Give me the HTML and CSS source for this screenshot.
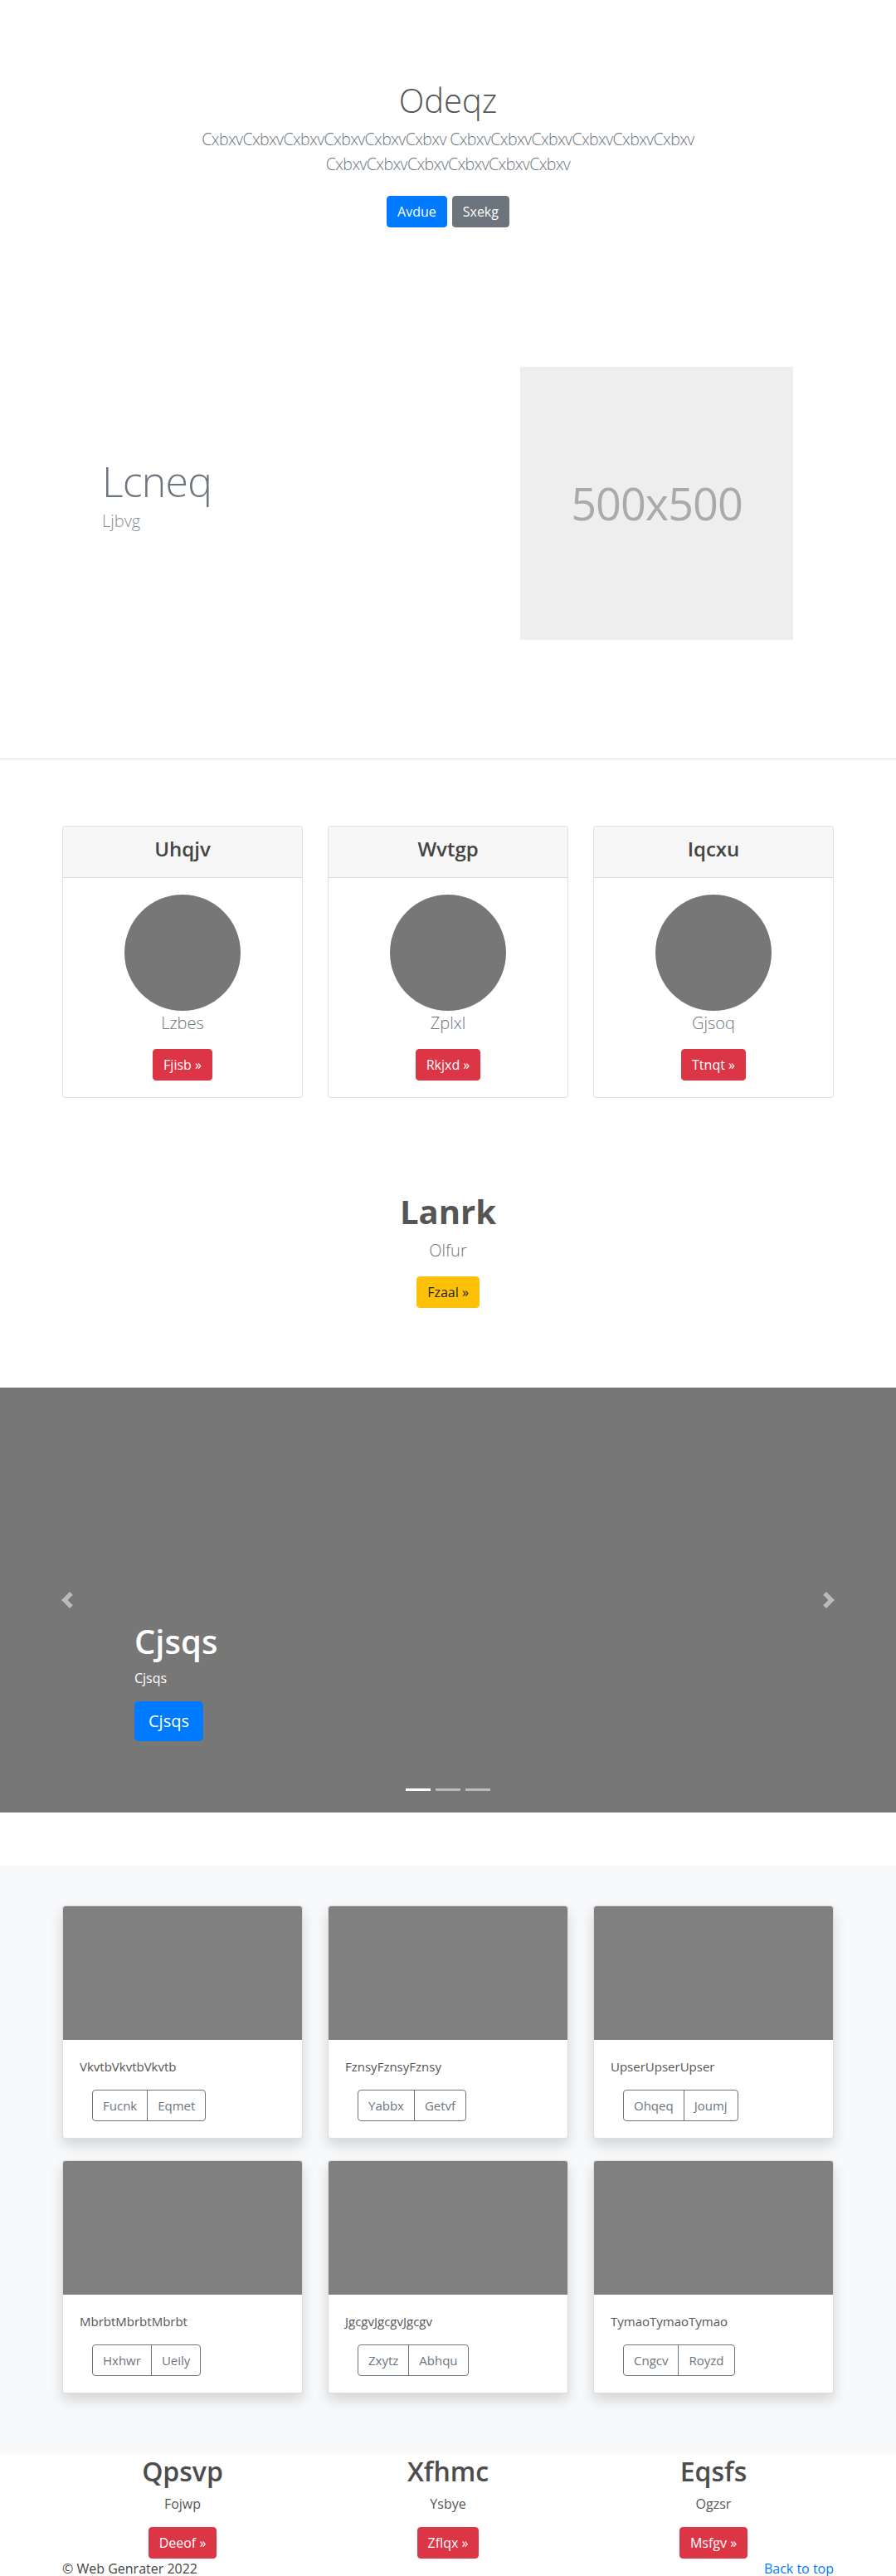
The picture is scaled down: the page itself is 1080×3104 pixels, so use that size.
FILE: index.html
```html
<!DOCTYPE html>
<html lang="en">
<head>
<meta charset="utf-8">
<title>Odeqz</title>
<link rel="stylesheet" href="styles.css">
</head>
<body>
<section class="hero">
  <h1 class="hero-title">Odeqz</h1>
  <p class="hero-lead">CxbxvCxbxvCxbxvCxbxvCxbxvCxbxv CxbxvCxbxvCxbxvCxbxvCxbxvCxbxv CxbxvCxbxvCxbxvCxbxvCxbxvCxbxv</p>
  <div class="hero-actions">
    <a class="btn btn-primary">Avdue</a>
    <a class="btn btn-secondary">Sxekg</a>
  </div>
</section>

<section class="feature">
  <div class="container feature-row">
    <div class="feature-text">
      <h2 class="feature-heading">Lcneq</h2>
      <p class="feature-lead">Ljbvg</p>
    </div>
    <div class="placeholder">500x500</div>
  </div>
</section>

<hr class="divider">

<section class="team">
  <div class="container team-grid">
    <div class="card">
      <div class="card-header"><h4>Uhqjv</h4></div>
      <div class="card-body center">
        <div class="avatar"></div>
        <p class="member">Lzbes</p>
        <a class="btn btn-danger">Fjisb &raquo;</a>
      </div>
    </div>
    <div class="card">
      <div class="card-header"><h4>Wvtgp</h4></div>
      <div class="card-body center">
        <div class="avatar"></div>
        <p class="member">Zplxl</p>
        <a class="btn btn-danger">Rkjxd &raquo;</a>
      </div>
    </div>
    <div class="card">
      <div class="card-header"><h4>Iqcxu</h4></div>
      <div class="card-body center">
        <div class="avatar"></div>
        <p class="member">Gjsoq</p>
        <a class="btn btn-danger">Ttnqt &raquo;</a>
      </div>
    </div>
  </div>
</section>

<section class="cta">
  <h2 class="cta-title">Lanrk</h2>
  <p class="cta-lead">Olfur</p>
  <a class="btn btn-warning">Fzaal &raquo;</a>
</section>

<section class="carousel">
  <div class="carousel-caption">
    <h1>Cjsqs</h1>
    <p>Cjsqs</p>
    <a class="btn btn-primary btn-lg">Cjsqs</a>
  </div>
  <a class="carousel-control prev">
    <svg width="20" height="20" viewBox="0 0 8 8"><path fill="#fff" d="M5.25 0l-4 4 4 4 1.5-1.5L4.25 4l2.5-2.5L5.25 0z"/></svg>
  </a>
  <a class="carousel-control next">
    <svg width="20" height="20" viewBox="0 0 8 8"><path fill="#fff" d="M2.75 0l-1.5 1.5L3.75 4l-2.5 2.5L2.75 8l4-4-4-4z"/></svg>
  </a>
  <ol class="indicators">
    <li class="active"></li>
    <li></li>
    <li></li>
  </ol>
</section>

<section class="album">
  <div class="container album-grid">
    <div class="album-card">
      <div class="thumb"></div>
      <div class="album-body">
        <p>VkvtbVkvtbVkvtb</p>
        <div class="btn-group"><a class="btn-outline">Fucnk</a><a class="btn-outline">Eqmet</a></div>
      </div>
    </div>
    <div class="album-card">
      <div class="thumb"></div>
      <div class="album-body">
        <p>FznsyFznsyFznsy</p>
        <div class="btn-group"><a class="btn-outline">Yabbx</a><a class="btn-outline">Getvf</a></div>
      </div>
    </div>
    <div class="album-card">
      <div class="thumb"></div>
      <div class="album-body">
        <p>UpserUpserUpser</p>
        <div class="btn-group"><a class="btn-outline">Ohqeq</a><a class="btn-outline">Joumj</a></div>
      </div>
    </div>
    <div class="album-card">
      <div class="thumb"></div>
      <div class="album-body">
        <p>MbrbtMbrbtMbrbt</p>
        <div class="btn-group"><a class="btn-outline">Hxhwr</a><a class="btn-outline">Ueily</a></div>
      </div>
    </div>
    <div class="album-card">
      <div class="thumb"></div>
      <div class="album-body">
        <p>JgcgvJgcgvJgcgv</p>
        <div class="btn-group"><a class="btn-outline">Zxytz</a><a class="btn-outline">Abhqu</a></div>
      </div>
    </div>
    <div class="album-card">
      <div class="thumb"></div>
      <div class="album-body">
        <p>TymaoTymaoTymao</p>
        <div class="btn-group"><a class="btn-outline">Cngcv</a><a class="btn-outline">Royzd</a></div>
      </div>
    </div>
  </div>
</section>

<section class="marketing">
  <div class="container marketing-grid">
    <div class="col">
      <h2>Qpsvp</h2>
      <p>Fojwp</p>
      <a class="btn btn-danger">Deeof &raquo;</a>
    </div>
    <div class="col">
      <h2>Xfhmc</h2>
      <p>Ysbye</p>
      <a class="btn btn-danger">Zflqx &raquo;</a>
    </div>
    <div class="col">
      <h2>Eqsfs</h2>
      <p>Ogzsr</p>
      <a class="btn btn-danger">Msfgv &raquo;</a>
    </div>
  </div>
</section>

<footer class="container footer">
  <p>&copy; Web Genrater 2022</p>
  <a class="link">Back to top</a>
</footer>
</body>
</html>
```

FILE: styles.css
```css
* { box-sizing: border-box; }

body {
  margin: 0;
  font-family: "Open Sans", "Noto Sans", "Liberation Sans", sans-serif;
  font-size: 16px;
  line-height: 1.5;
  color: #212529;
  background: #fff;
}

p { margin: 0; }
h1, h2, h4 { margin: 0; }

.container {
  width: 930px;
  margin: 0 auto;
}

.btn {
  display: inline-block;
  font-size: 16px;
  line-height: 24px;
  padding: 6px 12px;
  border-radius: 4px;
  border: 1px solid transparent;
  text-decoration: none;
  cursor: pointer;
}
.btn-primary { background: #007bff; border-color: #007bff; color: #fff; }
.btn-secondary { background: #6c757d; border-color: #6c757d; color: #fff; }
.btn-danger { background: #dc3545; border-color: #dc3545; color: #fff; }
.btn-warning { background: #ffc107; border-color: #ffc107; color: #212529; }
.btn-lg { font-size: 20px; line-height: 30px; padding: 8px 16px; border-radius: 5px; }

/* hero */
.hero {
  text-align: center;
  padding-top: 97px;
}
.hero-title {
  font-size: 40px;
  line-height: 48px;
  font-weight: 300;
  color: #555;
  margin-bottom: 8px;
}
.hero-lead {
  font-size: 19.5px;
  line-height: 30px;
  font-weight: 300;
  color: #6c757d;
  max-width: 660px;
  margin: 0 auto 23px;
  letter-spacing: -0.6px;
}
.hero-actions {
  display: flex;
  justify-content: center;
  gap: 6px;
}

/* feature */
.feature {
  padding: 168px 0 143px;
}
.feature-row {
  display: flex;
  align-items: center;
  justify-content: space-between;
  padding: 0 49px 0 48px;
}
.feature-heading {
  font-size: 50px;
  line-height: 50px;
  font-weight: 300;
  color: #6c757d;
  letter-spacing: -0.8px;
  margin-bottom: 8px;
}
.feature-lead {
  font-size: 20px;
  line-height: 30px;
  font-weight: 300;
  color: #868e96;
  margin-bottom: 16px;
}
.placeholder {
  width: 329px;
  height: 329px;
  background: #eee;
  color: #aaa;
  font-size: 54px;
  display: flex;
  align-items: center;
  justify-content: center;
  letter-spacing: -1px;
}

.divider {
  margin: 0;
  border: 0;
  border-top: 1px solid #e5e5e5;
}

/* team cards */
.team { padding-top: 80px; }
.team-grid {
  display: grid;
  grid-template-columns: repeat(3, 1fr);
  gap: 30px;
}
.card {
  border: 1px solid rgba(0,0,0,.125);
  border-radius: 4px;
  background: #fff;
}
.card-header {
  background: #f7f7f7;
  border-bottom: 1px solid rgba(0,0,0,.125);
  padding: 12px 20px;
  text-align: center;
  border-radius: 3px 3px 0 0;
}
.card-header h4 {
  font-size: 24px;
  line-height: 29px;
  font-weight: 600;
  color: #444;
  margin-bottom: 8px;
}
.card-body { padding: 20px; }
.center { text-align: center; }
.avatar {
  width: 140px;
  height: 140px;
  border-radius: 50%;
  background: #777;
  margin: 0 auto;
}
.member {
  font-size: 20px;
  line-height: 30px;
  font-weight: 300;
  color: #6c757d;
  margin-bottom: 16px;
}

/* cta */
.cta {
  text-align: center;
  padding-top: 113px;
  padding-bottom: 96px;
}
.cta-title {
  font-size: 40px;
  line-height: 48px;
  font-weight: 700;
  color: #555;
  margin-bottom: 8px;
}
.cta-lead {
  font-size: 20px;
  line-height: 30px;
  font-weight: 300;
  color: #6c757d;
  margin-bottom: 16px;
}

/* carousel */
.carousel {
  position: relative;
  height: 512px;
  background: #777;
  margin-bottom: 64px;
}
.carousel-caption {
  position: absolute;
  left: 15%;
  right: 15%;
  bottom: 66px;
  padding: 20px 0;
  color: #fff;
  z-index: 10;
}
.carousel-caption h1 {
  font-size: 40px;
  line-height: 48px;
  font-weight: 600;
  margin-bottom: 8px;
}
.carousel-caption p {
  margin-bottom: 16px;
}
.carousel-control {
  position: absolute;
  top: 0;
  bottom: 0;
  width: 15%;
  display: flex;
  align-items: center;
  justify-content: center;
  opacity: .5;
}
.carousel-control.prev { left: 0; }
.carousel-control.next { right: 0; }
.indicators {
  position: absolute;
  left: 0;
  right: 0;
  bottom: 16px;
  margin: 0;
  padding: 0;
  list-style: none;
  display: flex;
  justify-content: center;
  gap: 6px;
}
.indicators li {
  width: 30px;
  height: 3px;
  margin-bottom: 10px;
  background: #fff;
  opacity: .5;
}
.indicators li.active { opacity: 1; }

/* album */
.album {
  background: #f8f9fa;
  padding: 48px 0 73px;
}
.album-grid {
  display: grid;
  grid-template-columns: repeat(3, 1fr);
  column-gap: 30px;
  row-gap: 26px;
}
.album-card {
  background: #fff;
  border: 1px solid rgba(0,0,0,.125);
  border-radius: 4px;
  box-shadow: 0 8px 16px rgba(0,0,0,.15);
  overflow: hidden;
}
.thumb {
  height: 161px;
  background: #808080;
}
.album-body {
  padding: 20px;
}
.album-body p {
  font-size: 15px;
  line-height: 24px;
  color: #555;
  margin-bottom: 16px;
}
.btn-group {
  display: inline-flex;
  margin-left: 15px;
}
.btn-outline {
  display: inline-block;
  font-size: 15px;
  line-height: 24px;
  padding: 6px 12px;
  color: #6c757d;
  border: 1px solid #6c757d;
}
.btn-outline:first-child { border-radius: 4px 0 0 4px; }
.btn-outline:last-child { border-radius: 0 4px 4px 0; margin-left: -1px; }

/* marketing */
.marketing-grid {
  display: grid;
  grid-template-columns: repeat(3, 1fr);
  gap: 30px;
  text-align: center;
  padding-top: 2px;
}
.marketing h2 {
  font-size: 32px;
  line-height: 38px;
  font-weight: 600;
  color: #4d4d4d;
  margin-bottom: 8px;
}
.marketing p {
  color: #555;
  margin-bottom: 16px;
}

.footer {
  display: flex;
  justify-content: space-between;
  align-items: flex-start;
  padding-top: 0;
}
.footer p { color: #444; }
.link { color: #007bff; text-decoration: none; }
```
